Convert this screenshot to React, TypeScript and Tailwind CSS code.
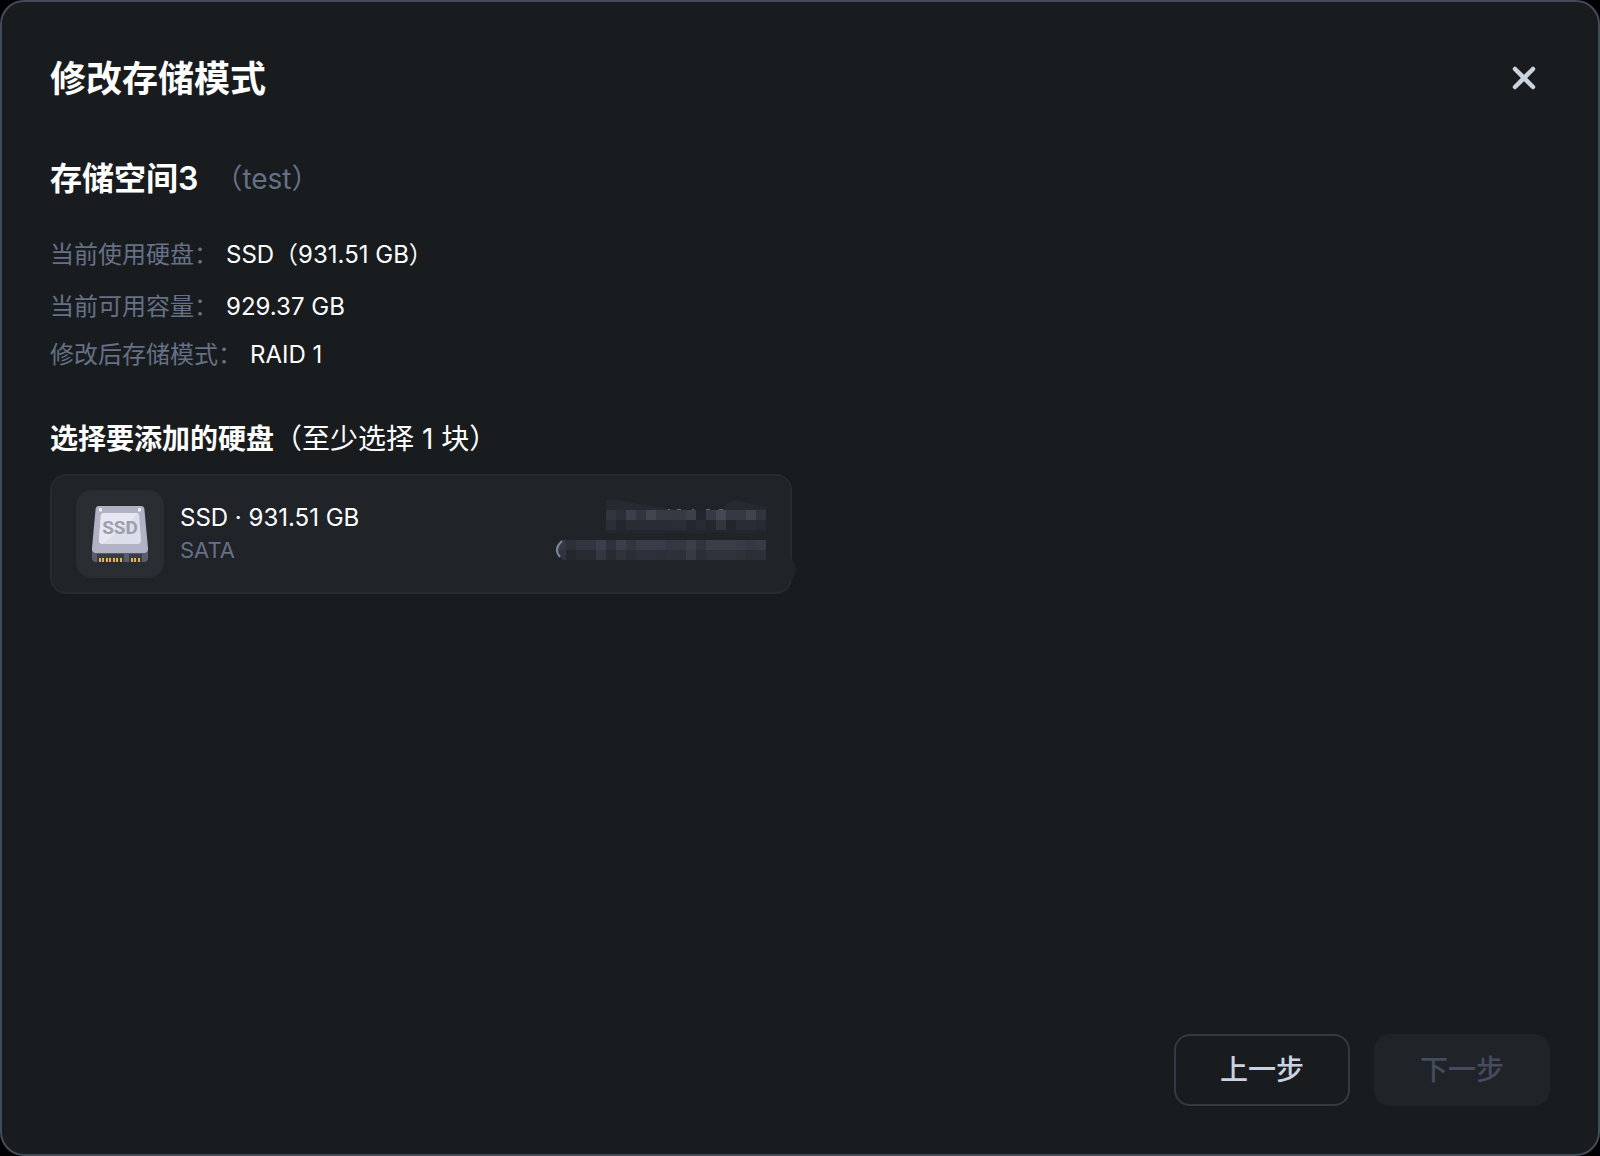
import { X } from "lucide-react";

type InfoRow = {
  label: string;
  value: string;
};

const usage: InfoRow[] = [
  { label: "当前使用硬盘：", value: "SSD（931.51 GB）" },
  { label: "当前可用容量：", value: "929.37 GB" },
];

const target: InfoRow = { label: "修改后存储模式：", value: "RAID 1" };

// Colours of the mosaic cells, each cell is 10x10
const modelCells = [
  ["#31353e", "#2b2f38", "#3b404b", "#31353e", "#40454f", "#353a43", "#353a43", "#343942", "#3b404a", "#23262c", "#353a44", "#424854", "#353943", "#353943", "#3f444f", "#30343d"],
  ["#2b2e35", "#23262c", "#292c33", "#292c33", "#292c33", "#292c33", "#2a2d34", "#2a2d34", "#24272f", "#282b33", "#24272e", "#31353d", "#22252a", "#292c34", "#292c33", "#262a31"],
];
const serialCells = [
  ["#343943", "#2c3038", "#32363f", "#32363f", "#3b3f4b", "#2e323a", "#3b3f4c", "#32363f", "#393d49", "#393d49", "#393d49", "#343842", "#343842", "#3b3f4b", "#30343d", "#393e49", "#393e49", "#393e49", "#363b45", "#343943", "#363b45"],
  ["#30343c", "#24272d", "#282c32", "#282c32", "#343741", "#272b32", "#2f323b", "#2a2e36", "#2e3139", "#2e3139", "#2b2f37", "#2c3038", "#2c3038", "#373a42", "#2b2e36", "#2f333c", "#2f333c", "#2f333c", "#2d3139", "#2a2e35", "#2b2f36"],
];

function SsdIcon() {
  return (
    <svg viewBox="0 0 56 56" className="size-14" aria-hidden="true">
      <path d="M0 42h56v10a4 4 0 0 1-4 4H4a4 4 0 0 1-4-4z" fill="#5a5d6e" />
      <path d="M5 48h27v8H5zM37 48h13v8H37z" fill="#3a3c48" />
      <g fill="#e3b04b">
        {[7, 10, 14, 17, 21, 24, 28, 39, 42, 46].map((x) => (
          <rect key={x} x={x} y="52" width="2" height="4" />
        ))}
      </g>
      <path d="M7 0h42q3 0 3.400 3L56 42q.4 5-4 5H4q-4.400 0-4-5L3.600 3Q4 0 7 0z" fill="#b1b3c4" />
      <path d="M12 7h32q3 0 3.200 3L49 34q.2 4-3.500 4h-35Q6.800 38 7 34L8.800 10Q9 7 12 7z" fill="#dcdeea" />
      <path d="M12 7h32q1 0 2 1L11 38q-4.200 0-4-4L8.800 10Q9 7 12 7z" fill="#e6e7f2" />
      <ellipse cx="8.500" cy="3.800" rx="1.600" ry="2" fill="#eceef6" />
      <ellipse cx="47.500" cy="3.800" rx="1.600" ry="2" fill="#eceef6" />
      <text
        x="28"
        y="28"
        textAnchor="middle"
        fontFamily="Roboto, sans-serif"
        fontSize="19"
        fontWeight="700"
        fill="#9c9eac"
      >
        SSD
      </text>
    </svg>
  );
}

function Mosaic() {
  return (
    <svg viewBox="0 -1 246 100" className="-mr-[30px] h-[100px] w-[246px] shrink-0" aria-hidden="true">
      <path d="M56 15h10l60 10H56z" fill="#272a31" />
      <path d="M172 25q4-9 14-10l30 7v3z" fill="#26292e" />
      <path d="M52 45h164v3H56z" fill="#23262c" />
      <path d="M118 24.500h2M127 24.500h4M142 24.500h2M156 24.500h4M169 24.500h4" stroke="#616978" strokeWidth="1" />
      {modelCells.map((row, y) =>
        row.map((color, x) => (
          <rect key={`${x}-${y}`} x={56 + x * 10} y={25 + y * 10} width="10" height="10" fill={color} />
        )),
      )}
      {serialCells.map((row, y) =>
        row.map((color, x) => (
          <rect key={`${x}-${y}`} x={6 + x * 10} y={55 + y * 10} width="10" height="10" fill={color} />
        )),
      )}
      <path d="M5 54h8q-12 11 1 22H5z" fill="#202328" />
      <path d="M12 56q-9 8-2 16" fill="none" stroke="#79849c" strokeWidth="2" />
      <path d="M236 74h5q5 4 5 11t-7 12h-3z" fill="#202328" />
    </svg>
  );
}

function Info({ label, value }: InfoRow) {
  return (
    <div className="flex gap-2">
      <dt className="text-[#667086]">{label}</dt>
      <dd>{value}</dd>
    </div>
  );
}

export default function App() {
  return (
    <div className="min-h-screen bg-black font-[Inter,'Noto_Sans_CJK_SC',sans-serif] text-white">
      <main className="flex min-h-screen flex-col rounded-[24px] border-2 border-[#434a59] bg-[#191c1e] p-12">
        <header className="flex h-14 items-center justify-between">
          <h1 className="pt-0.5 text-4xl font-semibold">修改存储模式</h1>
          <button type="button" aria-label="关闭" className="p-2 text-[#ccd3e0]">
            <X size={36} strokeWidth={3} />
          </button>
        </header>

        <div className="mt-12 flex h-[50px] items-center gap-4">
          <h2 className="text-[32px] font-semibold">存储空间3</h2>
          <span className="text-[28px] text-[#667086]">（test）</span>
        </div>

        <dl className="mt-8 pt-px text-2xl leading-9">
          <div className="flex flex-col gap-4">
            {usage.map((row) => (
              <Info key={row.label} {...row} />
            ))}
          </div>
          <div className="mt-3">
            <Info {...target} />
          </div>
        </dl>

        <h3 className="mt-[46px] text-[28px] font-semibold leading-10">
          选择要添加的硬盘<span className="font-normal">（至少选择 1 块）</span>
        </h3>
        <section className="mt-[15px] flex h-[120px] w-[742px] max-w-full items-center rounded-2xl border-2 border-[#272a2f] bg-[#202328] px-6">
          <div className="flex size-[88px] shrink-0 items-center justify-center rounded-2xl bg-[#2a2e32]">
            <SsdIcon />
          </div>
          <div className="ml-4 flex-1">
            <p className="text-2xl">SSD · 931.51 GB</p>
            <p className="text-[22px] leading-8 text-[#667086]">SATA</p>
          </div>
          <Mosaic />
        </section>

        <footer className="mt-auto flex justify-end gap-6 text-[28px] font-medium">
          <button type="button" className="h-[72px] w-44 rounded-2xl border-2 border-[#343a41] text-[#ccd3e0]">
            上一步
          </button>
          <button type="button" disabled className="h-[72px] w-44 rounded-2xl bg-[#202328] text-[#444c5e]">
            下一步
          </button>
        </footer>
      </main>
    </div>
  );
}
